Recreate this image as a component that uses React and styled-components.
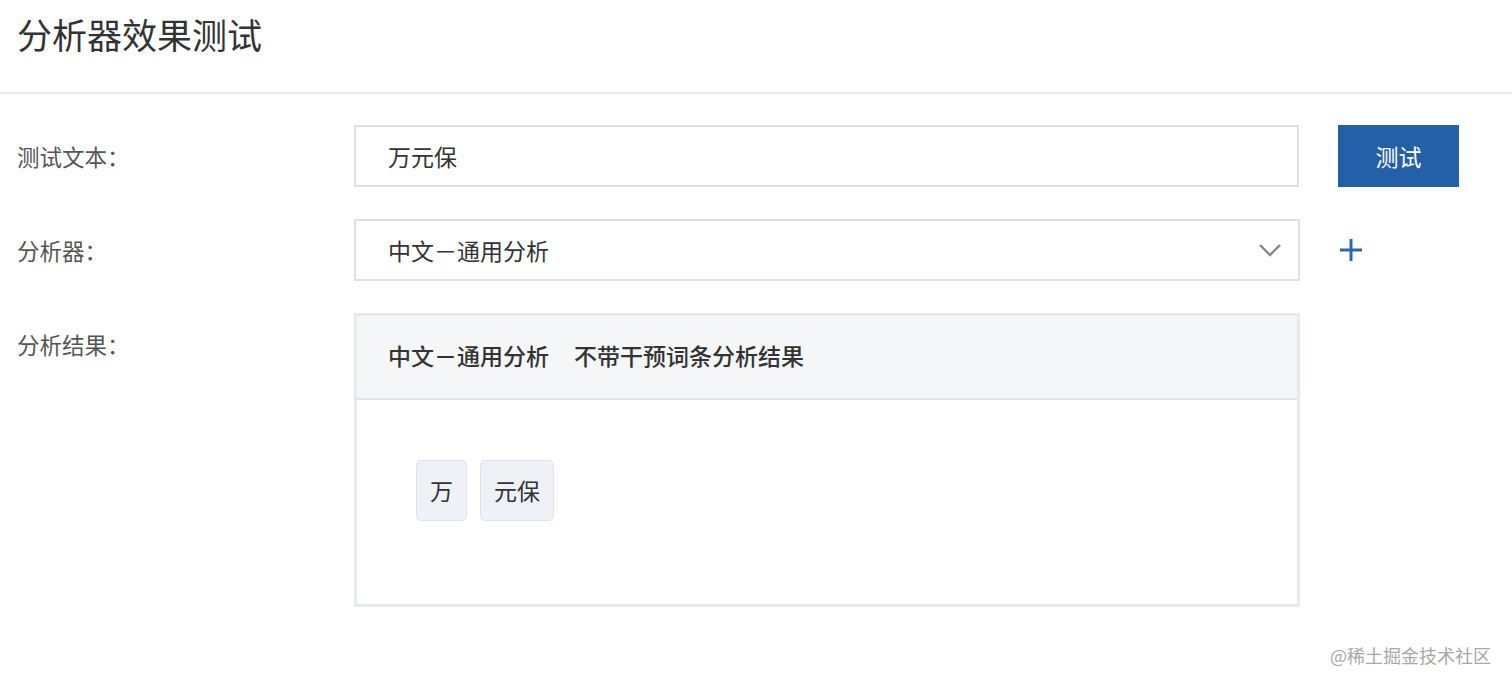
import React from "react";
import styled, { createGlobalStyle } from "styled-components";

const Global = createGlobalStyle`
  html, body { margin: 0; padding: 0; background: #fff; }
  body {
    font-family: "Noto Sans CJK SC", "Noto Sans", sans-serif;
    color: #333;
    height: 686px;
    overflow: hidden;
  }
  * { box-sizing: border-box; }
`;

const Page = styled.div`
  position: relative;
  width: 1512px;
  height: 686px;
`;

const Header = styled.header`
  height: 94px;
  padding: 11px 0 0 17px;
  border-bottom: 2px solid #ececec;
`;

const Title = styled.h1`
  margin: 0;
  font-size: 35px;
  font-weight: 400;
  line-height: 46px;
  color: #333;
`;

const Form = styled.div`
  display: grid;
  grid-template-columns: 299px 946px 121px;
  column-gap: 38px;
  row-gap: 32px;
  padding: 31px 0 0 17px;
`;

const Label = styled.div`
  height: 62px;
  line-height: 62px;
  font-size: 22.5px;
  color: #555;
  align-self: start;
`;

const Field = styled.div`
  position: relative;
  height: 62px;
  border: 2px solid #e0e0e0;
  display: flex;
  align-items: center;
  padding: 0 0 0 32px;
  font-size: 23px;
  color: #333;
  width: ${(p) => p.$w || "946px"};
`;

const Chevron = styled.svg`
  position: absolute;
  right: 16px;
  top: 50%;
  transform: translateY(-50%);
`;

const Button = styled.button`
  height: 62px;
  width: 121px;
  background: #2460a7;
  border: none;
  color: #fff;
  font-family: inherit;
  font-size: 23px;
  padding: 0;
`;

const IconCell = styled.div`
  height: 62px;
  display: flex;
  align-items: center;
  padding-left: 1px;
`;

const ResultBox = styled.div`
  width: 946px;
  border: 3px solid #e6e9ed;
`;

const ResultHead = styled.div`
  height: 84px;
  background: #f5f6f8;
  border-bottom: 2px solid #dfe3e8;
  display: flex;
  align-items: center;
  padding: 0 0 4px 31px;
  font-size: 23px;
  font-weight: 500;
  color: #333;
  gap: 25px;
`;

const ResultBody = styled.div`
  height: 204px;
  padding: 60px 59px 0;
  display: flex;
  align-items: flex-start;
  gap: 13px;
`;

const Tag = styled.span`
  height: 61px;
  line-height: 59px;
  padding: 0 13px;
  background: #eef2f7;
  border: 1px solid #dce3ea;
  border-radius: 5px;
  font-size: 23px;
  color: #333;
`;

const Watermark = styled.div`
  position: absolute;
  right: 21px;
  bottom: 19px;
  font-size: 18px;
  color: #a8a8a8;
  line-height: 24px;
`;

export default function App() {
  return (
    <Page>
      <Global />
      <Header>
        <Title>分析器效果测试</Title>
      </Header>
      <Form>
        <Label>测试文本：</Label>
        <Field $w="945px">万元保</Field>
        <Button>测试</Button>

        <Label>分析器：</Label>
        <Field>
          中文－通用分析
          <Chevron width="24" height="14" viewBox="0 0 24 14">
            <path d="M2 2 L12 12 L22 2" fill="none" stroke="#888" strokeWidth="2.4" />
          </Chevron>
        </Field>
        <IconCell>
          <svg width="24" height="24" viewBox="0 0 24 24">
            <path d="M12 1 V23 M1 12 H23" stroke="#2d68b8" strokeWidth="3" fill="none" />
          </svg>
        </IconCell>

        <Label>分析结果：</Label>
        <ResultBox>
          <ResultHead>
            <span>中文－通用分析</span>
            <span>不带干预词条分析结果</span>
          </ResultHead>
          <ResultBody>
            <Tag>万</Tag>
            <Tag>元保</Tag>
          </ResultBody>
        </ResultBox>
        <div />
      </Form>
      <Watermark>@稀土掘金技术社区</Watermark>
    </Page>
  );
}
